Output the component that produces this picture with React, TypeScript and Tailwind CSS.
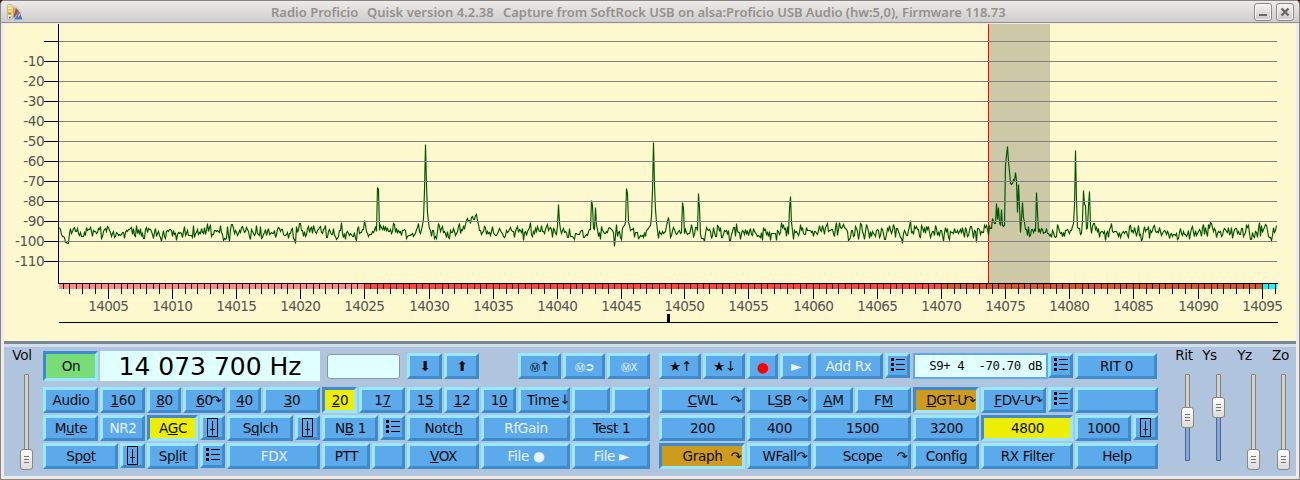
import type { ReactNode } from "react";
import clsx from "clsx";

// ---------- spectrum data ----------

const X0 = 59;
const X1 = 1276;

// samples that stand out of the noise floor, as [x, y]
const SIGNALS: [number, number][] = [
  [59, 227], [60, 229], [61, 234], [62, 236], [63, 236], [64, 237], [65, 242], [66, 242], [67, 243], [68, 243], [69, 233], [70, 228],
  [107, 226], [136, 225], [161, 241], [176, 240], [193, 225], [207, 223], [256, 225], [260, 226], [295, 243],
  [340, 230], [341, 222], [342, 233], [363, 229], [364, 220], [365, 225],
  [376, 231], [377, 187], [378, 189], [379, 230], [380, 225], [393, 223], [394, 224],
  [417, 227], [418, 223], [419, 231], [421, 229], [422, 225], [423, 218], [424, 190], [425, 144], [426, 185], [427, 212], [428, 222], [429, 228], [430, 230], [431, 236],
  [464, 228], [465, 224], [466, 220], [467, 218], [468, 221], [469, 220], [470, 223], [471, 217], [472, 216], [473, 219], [474, 219], [475, 215], [476, 214], [477, 220], [478, 224], [479, 230],
  [523, 240], [530, 222], [557, 225], [558, 204], [559, 222], [560, 229],
  [590, 229], [591, 200], [592, 205], [593, 228], [594, 229], [595, 207], [596, 225], [600, 239],
  [613, 232], [614, 246], [615, 235], [622, 228], [623, 226], [624, 225], [625, 222], [626, 188], [627, 193], [628, 222], [629, 225], [630, 230],
  [648, 228], [649, 226], [650, 225], [651, 216], [652, 190], [653, 142], [654, 185], [655, 209], [656, 222], [657, 230], [658, 238],
  [666, 225], [667, 221], [668, 217], [669, 225], [681, 232], [682, 202], [683, 208], [684, 233], [691, 224],
  [697, 230], [698, 193], [699, 208], [700, 234], [729, 240], [730, 240], [736, 223], [762, 240], [776, 240],
  [781, 222], [782, 227], [788, 234], [789, 208], [790, 196], [791, 222], [792, 230],
  [822, 225], [836, 222], [839, 222], [848, 240], [861, 224], [902, 243], [909, 226], [910, 220], [911, 232],
  [976, 242], [991, 228], [992, 218], [993, 221], [994, 223], [995, 223], [996, 203], [997, 219], [998, 207], [999, 222], [1000, 225], [1001, 209], [1002, 225], [1003, 226],
  [1004, 225], [1005, 165], [1006, 155], [1007, 146], [1008, 161], [1009, 171], [1010, 183], [1011, 184], [1012, 183], [1013, 179], [1014, 180], [1015, 172], [1016, 180],
  [1017, 212], [1018, 184], [1019, 206], [1020, 232], [1021, 218], [1022, 202], [1023, 217], [1024, 222], [1025, 229], [1026, 229],
  [1035, 231], [1036, 192], [1037, 212], [1038, 232], [1071, 230], [1072, 226], [1073, 223], [1074, 205], [1075, 150], [1076, 200], [1077, 227], [1078, 228],
  [1081, 233], [1082, 219], [1083, 190], [1084, 204], [1085, 205], [1086, 229], [1087, 227], [1088, 206], [1089, 191], [1090, 225], [1091, 233], [1092, 226],
  [1093, 223], [1094, 223], [1095, 229], [1105, 240], [1130, 225], [1178, 238], [1189, 239], [1208, 224], [1210, 222], [1211, 223], [1212, 227],
  [1250, 239], [1251, 239], [1264, 227], [1265, 224], [1266, 225], [1271, 240], [1272, 235], [1274, 232], [1275, 230], [1276, 225],
];

function buildTrace() {
  const fixed = new Map(SIGNALS);
  let seed = 4711;
  const rand = () => {
    seed = (seed * 1103515245 + 12345) % 2147483648;
    return seed / 2147483648;
  };
  let prev = 0;
  const pts: string[] = [];
  for (let x = X0; x <= X1; x++) {
    const n = (rand() + rand() + rand() - 1.5) * 6.8;
    prev = prev * 0.25 + n;
    const y = fixed.get(x) ?? Math.round(231.6 + prev);
    pts.push(`${x + 0.5},${y + 0.5}`);
  }
  return pts.join(" ");
}

const TRACE = buildTrace();
const GRID = [41, 61, 81, 101, 121, 141, 161, 181, 201, 221, 241, 261];

// pixel column of every 5 kHz mark, from 14005 up
const MARKS = [108, 172, 236, 300, 364, 429, 493, 557, 621, 684, 748, 813, 877, 941, 1005, 1069, 1133, 1198, 1262];

function freqX(khz: number) {
  const k = (khz - 14005) / 5;
  const i = Math.min(Math.max(Math.floor(k), 0), MARKS.length - 2);
  return Math.floor(MARKS[i] + (k - i) * (MARKS[i + 1] - MARKS[i]) + 0.3);
}

// tick every 500 Hz
const TICKS = Array.from({ length: 190 }, (_, i) => 14001.5 + i * 0.5).filter((f) => freqX(f) <= X1);

function Spectrum() {
  return (
    <svg width="1292" height="317" viewBox="4 24 1292 317" shapeRendering="crispEdges" className="block shrink-0">
      <rect x="4" y="24" width="1292" height="317" fill="#fef8ce" />
      <rect x="989" y="24" width="61" height="259" fill="#cdc8a5" />
      <rect x="988" y="24" width="1" height="259" fill="#ff0000" />

      <polyline points={TRACE} fill="none" stroke="#005500" strokeWidth="1.15" shapeRendering="auto" />

      {GRID.map((y, i) => (
        <g key={y}>
          <rect x="59" y={y} width="1218" height="1" fill="#808080" />
          <rect x="44" y={y} width="15" height="1" fill="#000" />
          {i > 0 && (
            <text x="44.3" y={y + 5} textAnchor="end" fontSize="13.6" letterSpacing="-0.4" fill="#555" fontFamily="DejaVu Sans, sans-serif">
              {-10 * i}
            </text>
          )}
        </g>
      ))}
      <rect x="58" y="24" width="1" height="260" fill="#000" />

      {/* band plan */}
      <rect x="59" y="284" width="305" height="5" fill="#ff8888" />
      <rect x="364" y="284" width="577" height="5" fill="#ff4444" />
      <rect x="941" y="284" width="321" height="5" fill="#d9552b" />
      <rect x="1262" y="284" width="15" height="5" fill="#00ffff" />
      <rect x="58" y="283" width="1220" height="1" fill="#000" />
      {TICKS.map((f) => (
        <rect key={f} x={freqX(f)} y="284" width="1" height={f % 5 === 0 ? 15 : f % 1 === 0 ? 10 : 5} fill="#000" />
      ))}
      {MARKS.map((x, i) => (
        <text key={x} x={x + 0.3} y="311" textAnchor="middle" fontSize="13.6" letterSpacing="-0.6" fill="#555" fontFamily="DejaVu Sans, sans-serif">
          {14005 + i * 5}
        </text>
      ))}

      <rect x="59" y="322" width="1219" height="1" fill="#000" />
      <rect x="667" y="314" width="3" height="8" fill="#000" />
    </svg>
  );
}

// ---------- controls ----------

type Tone = "blue" | "green" | "yellow" | "gold";

interface BtnProps {
  w: string;
  h?: string;
  tone?: Tone;
  dim?: boolean;
  mark?: string;
  children?: ReactNode;
}

function Btn({ w, h = "h-[26px]", tone = "blue", dim, mark, children }: BtnProps) {
  return (
    <div
      className={clsx(
        "relative flex shrink-0 items-center justify-center whitespace-nowrap border-[3px] pt-[2px] leading-none",
        w,
        h,
        tone === "blue"
          ? "border-t-[#97e9ff] border-l-[#97e9ff] border-r-[#3c8ccd] border-b-[#3c8ccd] bg-[#5caaec]"
          : "border-t-[#3c8ccd] border-l-[#3c8ccd] border-r-[#97e9ff] border-b-[#97e9ff]",
        tone === "green" && "bg-[#78dd78]",
        tone === "yellow" && "bg-[#eeee00]",
        tone === "gold" && "bg-[#cd9b1d]",
        dim ? "text-[#e8f4ff]" : "text-[#0a0a0a]",
      )}
    >
      <span className={mark === "↓" ? "pr-[2px]" : "pl-[1px]"}>{children}</span>
      {mark && (
        <span className={clsx("absolute text-[13px]", mark === "↓" ? "-right-[3px] top-[3px]" : "right-[1px] top-[4px]")}>{mark}</span>
      )}
    </div>
  );
}

function U({ children }: { children: ReactNode }) {
  return <span className="underline decoration-1 underline-offset-[1px]">{children}</span>;
}

// small square button that holds a 19x19 glyph
function IconBtn({ children }: { children: ReactNode }) {
  return (
    <div className="size-[25px] shrink-0 border-[3px] border-t-[#97e9ff] border-l-[#97e9ff] border-r-[#3c8ccd] border-b-[#3c8ccd] bg-[#5caaec]">
      <svg width="19" height="19" viewBox="0 0 19 19" className="block" shapeRendering="crispEdges" fill="#000">
        {children}
      </svg>
    </div>
  );
}

function ListBtn() {
  return (
    <IconBtn>
      {[2, 7, 12].map((y) => (
        <g key={y}>
          <rect x="3" y={y} width="3" height="3" />
          <rect x="8" y={y + 1} width="9" height="1" />
        </g>
      ))}
    </IconBtn>
  );
}

function SliderBtn() {
  return (
    <IconBtn>
      <rect x="4.5" y="0.5" width="10" height="18" fill="none" stroke="#000" />
      <rect x="9" y="3" width="1" height="14" />
      <rect x="7" y="11" width="5" height="1" />
    </IconBtn>
  );
}

function Row({ children }: { children: ReactNode }) {
  return <div className="flex h-[26px] gap-[2px]">{children}</div>;
}

interface SliderProps {
  w: string;
  label: string;
  shift: string;
  pos: number;
  fill?: boolean;
}

function Slider({ w, label, shift, pos, fill }: SliderProps) {
  return (
    <div className={clsx("flex shrink-0 flex-col items-center text-[#0a0a0a]", w)}>
      <div className={clsx("h-[27px] pt-[2px] leading-[13px]", shift)}>{label}</div>
      <div className="relative h-[96px] w-[13px]">
        <div className={clsx("mx-auto w-[5px] rounded-[1px] border border-[#85827e] bg-[#d5d2ce]", fill ? "h-[87px]" : "h-[90px]")} />
        {fill && (
          <div
            className="absolute bottom-[9px] left-[4px] w-[5px] rounded-[1px] border border-[#4a6791] bg-[#86a9da]"
            style={{ top: pos + 18 }}
          />
        )}
        <div
          className="absolute left-0 flex h-[21px] w-[13px] flex-col items-center justify-center gap-[2px] rounded-[3px] border border-[#8a8784] bg-linear-to-b from-white to-[#dddad7]"
          style={{ top: pos }}
        >
          <i className="block h-px w-[5px] bg-[#777]" />
          <i className="block h-px w-[5px] bg-[#777]" />
          <i className="block h-px w-[5px] bg-[#777]" />
        </div>
      </div>
    </div>
  );
}

function LeftPad() {
  return (
    <div className="flex w-[607px] shrink-0 flex-col gap-[2px]">
      <div className="mb-[4px] flex h-[30px] items-center gap-[2px]">
        <Btn w="w-[55px]" h="h-[30px]" tone="green">On</Btn>
        <div className="flex h-[30px] w-[220px] items-center justify-center bg-[#e0ffff] text-[25px] leading-none tracking-normal text-black">
          14 073 700 Hz
        </div>
        <div className="mx-[5px] h-[25px] w-[73px] rounded-[3px] border border-[#8d9698] bg-[#e0ffff]" />
        <Btn w="w-[35px]">⬇</Btn>
        <Btn w="w-[35px]">⬆</Btn>
        <div className="w-[35px]" />
        <Btn w="w-[43px]"><span className="text-[10px]">Ⓜ</span>↑</Btn>
        <Btn w="w-[42px]" dim><span className="text-[10px]">Ⓜ</span><span className="text-[12.5px]">➲</span></Btn>
        <Btn w="w-[43px]" dim><span className="text-[10px]">ⓂX</span></Btn>
      </div>
      <Row>
        <Btn w="w-[55px]">Audio</Btn>
        <Btn w="w-[45px]"><U>1</U>60</Btn>
        <Btn w="w-[34px]"><U>8</U>0</Btn>
        <Btn w="w-[42px]" mark="↷"><U>6</U>0</Btn>
        <Btn w="w-[34px]"><U>4</U>0</Btn>
        <Btn w="w-[57px]"><U>3</U>0</Btn>
        <Btn w="w-[35px]" tone="yellow"><U>2</U>0</Btn>
        <Btn w="w-[46px]">1<U>7</U></Btn>
        <Btn w="w-[35px]">1<U>5</U></Btn>
        <Btn w="w-[35px]"><U>1</U>2</Btn>
        <Btn w="w-[35px]">1<U>0</U></Btn>
        <Btn w="w-[52px]" mark="↓">Tim<U>e</U></Btn>
        <Btn w="w-[38px]" />
        <Btn w="w-[38px]" />
      </Row>
      <Row>
        <Btn w="w-[55px]">M<U>u</U>te</Btn>
        <Btn w="w-[45px]" dim>NR2</Btn>
        <Btn w="w-[51px]" tone="yellow">A<U>G</U>C</Btn>
        <SliderBtn />
        <Btn w="w-[66px]">S<U>q</U>lch</Btn>
        <SliderBtn />
        <Btn w="w-[56px]">N<U>B</U> 1</Btn>
        <ListBtn />
        <Btn w="w-[72px]">Notc<U>h</U></Btn>
        <Btn w="w-[89px]" dim>RfGain</Btn>
        <Btn w="w-[78px]">Test 1</Btn>
      </Row>
      <Row>
        <Btn w="w-[75px]">Sp<U>o</U>t</Btn>
        <SliderBtn />
        <Btn w="w-[51px]">Sp<U>l</U>it</Btn>
        <ListBtn />
        <Btn w="w-[93px]" dim>FDX</Btn>
        <Btn w="w-[48px]">PTT</Btn>
        <Btn w="w-[33px]" />
        <Btn w="w-[72px]"><U>V</U>OX</Btn>
        <Btn w="w-[89px]" dim>File ●</Btn>
        <Btn w="w-[78px]" dim>File ►</Btn>
      </Row>
    </div>
  );
}

function RightPad() {
  return (
    <div className="ml-[9px] flex w-[499px] shrink-0 flex-col gap-[2px]">
      <div className="mt-[2px] mb-[6px] flex h-[26px] gap-[2px]">
        <Btn w="w-[42px]">★↑</Btn>
        <Btn w="w-[42px]">★↓</Btn>
        <Btn w="w-[31px]"><span className="text-[14px] text-[#ff0000]">●</span></Btn>
        <Btn w="w-[31px]" dim>►</Btn>
        <Btn w="w-[70px]" dim>Add Rx</Btn>
        <ListBtn />
        <div className="ml-px flex h-[26px] w-[135px] items-center justify-end whitespace-pre border-2 border-[#5caaec] bg-[#e0ffff] pt-px pr-[4px] font-['DejaVu_Sans_Mono',monospace] text-[12.3px] leading-none tracking-[-0.35px] text-[#0a0a0a]">
          {"S9+ 4  -70.70 dB"}
        </div>
        <div className="-ml-[2px] flex gap-[2px]">
          <ListBtn />
          <Btn w="w-[82px]">RIT 0</Btn>
        </div>
      </div>
      <Row>
        <Btn w="w-[86px]" mark="↷"><U>C</U>WL</Btn>
        <Btn w="w-[64px]" mark="↷">L<U>S</U>B</Btn>
        <Btn w="w-[40px]"><U>A</U>M</Btn>
        <Btn w="w-[56px]">F<U>M</U></Btn>
        <Btn w="w-[66px]" tone="gold" mark="↷"><U>D</U>GT-U</Btn>
        <Btn w="w-[65px]" mark="↷"><U>F</U>DV-U</Btn>
        <ListBtn />
        <Btn w="w-[83px]" />
      </Row>
      <Row>
        <Btn w="w-[86px]">200</Btn>
        <Btn w="w-[64px]">400</Btn>
        <Btn w="w-[98px]">1500</Btn>
        <Btn w="w-[66px]">3200</Btn>
        <Btn w="w-[92px]" tone="yellow">4800</Btn>
        <Btn w="w-[56px]">1000</Btn>
        <SliderBtn />
      </Row>
      <Row>
        <Btn w="w-[86px]" tone="gold" mark="↷">Graph</Btn>
        <Btn w="w-[64px]" mark="↷">WFall</Btn>
        <Btn w="w-[98px]" mark="↷">Scope</Btn>
        <Btn w="w-[66px]">Config</Btn>
        <Btn w="w-[92px]">RX Filter</Btn>
        <Btn w="w-[83px]">Help</Btn>
      </Row>
    </div>
  );
}

function TitleBar() {
  return (
    <div className="flex h-[23px] shrink-0 items-center border-t border-b border-t-[#8a8583] border-b-[#918e8b] bg-linear-to-b from-[#ecebea] to-[#cfcdcb] pl-[6px] pr-[5px]">
      <svg width="16" height="16" viewBox="0 0 16 16" className="block">
        <rect x="0.5" y="0.5" width="4.5" height="15" rx="1" fill="#f2f0e6" stroke="#999" strokeWidth="0.6" />
        <rect x="1" y="1.5" width="3.5" height="2.5" fill="#f5e24a" />
        <rect x="1" y="5" width="3.5" height="2.5" fill="#f2d21c" />
        <rect x="1" y="8.3" width="3.5" height="2.5" fill="#c9a010" />
        <circle cx="2.8" cy="13.5" r="1" fill="#555" />
        <path d="M5.5 1 Q12 1.5 15 8 L15 12 L6 15 Z" fill="#d8d4d0" />
        <path d="M6 3 l3 1 -1 5 -2 3z" fill="#e9a23a" />
        <path d="M9 4 l3 3 -4 6 -2 1z" fill="#86605c" />
        <path d="M11.5 7 l2 2 -5 5z" fill="#8a6da0" />
        <path d="M7 15.5 l3-4 1.5 1.5 2-3 2 5.5z" fill="#4c7fc0" />
      </svg>
      <div className="flex flex-1 whitespace-pre pt-[2px] pl-[248px] font-['Noto_Sans',sans-serif] text-[13px] font-semibold leading-none text-[#94908d]">
        <span className="w-[96px]">Radio Proficio</span>
        <span className="w-[136px]">Quisk version 4.2.38</span>
        <span className="tracking-[-0.045px]">Capture from SoftRock USB on alsa:Proficio USB Audio (hw:5,0), Firmware 118.73</span>
      </div>
      <div className="flex gap-[4px]">
        <div className="flex size-[18px] items-end justify-center rounded-[3px] border border-[#8a8784] bg-linear-to-b from-[#f6f5f4] to-[#cbc8c5] pb-[4px] shadow-[inset_0_0_0_1px_#f8f8f7]">
          <i className="block h-[2px] w-[8px] bg-[#6b6866]" />
        </div>
        <div className="flex size-[18px] items-center justify-center rounded-[3px] border border-[#8a8784] bg-linear-to-b from-[#f6f5f4] to-[#cbc8c5] shadow-[inset_0_0_0_1px_#f8f8f7]">
          <svg width="10" height="10" viewBox="0 0 10 10">
            <path d="M1.5 1.5 L8.5 8.5 M8.5 1.5 L1.5 8.5" stroke="#6b6866" strokeWidth="2.4" />
          </svg>
        </div>
      </div>
    </div>
  );
}

export default function App() {
  return (
    <div className="h-[480px] w-[1300px] overflow-hidden bg-[#3a1f1f]">
      <div className="flex h-full flex-col overflow-hidden rounded-t-[5px] border-x border-b border-[#8a8583] bg-[#edebea]">
        <TitleBar />
        <div className="mx-[3px] mt-px flex flex-col font-['DejaVu_Sans',sans-serif] text-[13.6px] tracking-[-0.35px]">
          <Spectrum />
          <div className="h-[3px] bg-[#778899]" />
          <div className="h-[3px] bg-[#d3deec]" />
          <div className="flex h-[129px] bg-[#b0c4de]">
            <Slider w="w-[45px] -mr-[6px]" label="Vol" shift="pr-[9px]" pos={75} />
            <div className="flex pt-[4px]">
              <LeftPad />
              <RightPad />
            </div>
            <div className="ml-[11px] flex">
              <Slider w="w-[37px]" label="Rit" shift="pr-[7px]" pos={33} fill />
              <Slider w="w-[25px]" label="Ys" shift="pr-[18px]" pos={23} fill />
              <Slider w="w-[45px]" label="Yz" shift="pr-[18px]" pos={75} />
              <Slider w="w-[15px]" label="Zo" shift="pr-[6px]" pos={75} />
            </div>
          </div>
        </div>
      </div>
    </div>
  );
}
